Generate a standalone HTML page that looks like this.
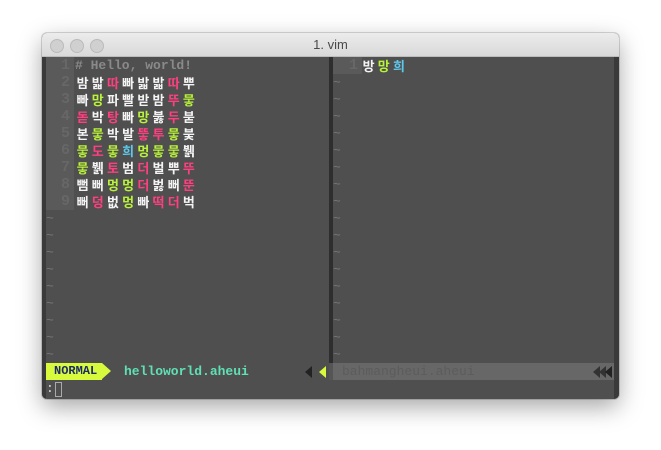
<!DOCTYPE html>
<html><head><meta charset="utf-8"><style>
body{margin:0;width:661px;height:450px;background:#fff;position:relative;overflow:hidden;font-family:"Liberation Mono","Noto Sans CJK KR",monospace;}
.win{position:absolute;left:42px;top:33px;width:577px;height:366px;border-radius:5px;box-shadow:0 8px 24px rgba(0,0,0,.35),0 0 0 1px rgba(0,0,0,.15);overflow:hidden;background:#4f4f4f}
.tb{position:absolute;left:0;top:0;width:577px;height:23px;background:linear-gradient(#ececec,#d9d9d9);border-bottom:1px solid #bdbdbd;text-align:center;font:13px "Liberation Sans",sans-serif;color:#4a4a4a;line-height:23px}
.dot{position:absolute;top:6px;width:12px;height:12px;border-radius:50%;background:#d0d0d0;border:0.5px solid #bbb}
.a{position:absolute;font-size:13px;line-height:17px;height:17px;white-space:pre}
.k span{display:inline-block;width:15.2px;text-align:center;font-family:"Noto Sans CJK KR",sans-serif;font-weight:bold;font-size:13px}
.W{color:#f4f4f4}.P{color:#ff3f7f}.G{color:#b8f23a}.C{color:#5ec8ea}
.n{color:#676767;text-align:right;width:24px;font-size:15px;font-weight:bold}
.t{color:#777;font-size:13px}
.tri{position:absolute;border-top:6px solid transparent;border-bottom:6px solid transparent;border-right:7px solid #333}
</style></head><body>
<div class="win">
<div class="tb">1. vim</div>
<div class="dot" style="left:8px"></div><div class="dot" style="left:28px"></div><div class="dot" style="left:48px"></div>
<div style="position:absolute;left:0;top:24px;width:4px;height:342px;background:#3a3a3a"></div>
<div style="position:absolute;left:4px;top:24px;width:28px;height:153px;background:#5a5a5a"></div>
<div style="position:absolute;left:287px;top:24px;width:4px;height:306px;background:#2e2e2e"></div>
<div style="position:absolute;left:291px;top:24px;width:29px;height:17px;background:#5a5a5a"></div>
<div style="position:absolute;left:572px;top:24px;width:5px;height:342px;background:#3a3a3a"></div>
<div id="L"></div>
<div style="position:absolute;left:4px;top:330px;width:56px;height:17px;background:#d8fa3c;color:#1a2a6a;font-weight:bold;font-size:12px;line-height:17px;padding-left:8px;box-sizing:border-box">NORMAL</div>
<div style="position:absolute;left:60px;top:330px;width:0;height:0;border-top:8.5px solid transparent;border-bottom:8.5px solid transparent;border-left:9px solid #d8fa3c"></div>
<div class="a" style="left:82px;top:330px;color:#5fe0b5;font-weight:bold">helloworld.aheui</div>
<div class="tri" style="left:263px;top:333px;border-right-color:#222"></div>
<div class="tri" style="left:277px;top:333px;border-right-color:#d8fa3c"></div>
<div style="position:absolute;left:287px;top:330px;width:4px;height:17px;background:#555"></div>
<div style="position:absolute;left:291px;top:330px;width:281px;height:17px;background:#676767"></div>
<div class="a" style="left:300px;top:330px;color:#5c5c5c">bahmangheui.aheui</div>
<div class="tri" style="left:551px;top:333px"></div>
<div class="tri" style="left:557px;top:333px"></div>
<div class="tri" style="left:563px;top:333px;border-right-color:#222"></div>
<div class="a" style="left:4px;top:347px;color:#ddd">:</div>
<div style="position:absolute;left:13px;top:349px;width:5px;height:13px;border:1px solid #aaa"></div>
</div>
<script>
(function(){
var rows=[["n","# Hello, world!"],
"W밤W밟P따W빠W밟W밟P따W뿌","W빠G망W파W빨W받W밤P뚜G뭏","P돋W박P탕W빠G망W붏P두W붇","W본G뭏W박W발P뚷P투G뭏W붖",
"G뭏P도G뭏C희G멍G뭏G뭏W뷁","G뭏W뷁P토W범P더W벌W뿌P뚜","W뻠W뻐G멍G멍P더W벓W뻐P뚠","W뻐P덩W벖G멍W빠P떡P더W벅"];
var h="";
for(var i=0;i<18;i++){var y=24+17*i;
 if(i<9){h+='<div class="a n" style="left:4px;top:'+y+'px">'+(i+1)+'</div>';
  if(i==0)h+='<div class="a" style="left:33px;top:'+y+'px;color:#8a8a8a;font-weight:bold">'+rows[0][1]+'</div>';
  else{var s=rows[i],o='';for(var j=0;j<s.length;j+=2)o+='<span class="'+s[j]+'">'+s[j+1]+'</span>';
   h+='<div class="a k" style="left:33px;top:'+y+'px">'+o+'</div>';}
 } else h+='<div class="a t" style="left:4px;top:'+y+'px">~</div>';
 if(i==0){h+='<div class="a n" style="left:292px;top:'+y+'px">1</div><div class="a k" style="left:319px;top:'+y+'px"><span class="W">방</span><span class="G">망</span><span class="C">희</span></div>';}
 else h+='<div class="a t" style="left:291px;top:'+y+'px">~</div>';
}
document.getElementById("L").innerHTML=h;
})();
</script>
</body></html>
